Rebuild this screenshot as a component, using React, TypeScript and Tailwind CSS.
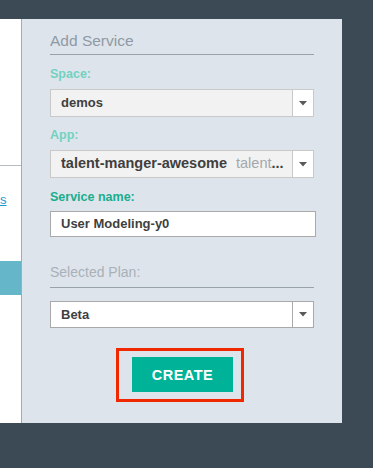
import React from "react";

const font = { fontFamily: '"Liberation Sans", Arial, Helvetica, sans-serif' };

function Arrow() {
  return (
    <svg width="8" height="5" viewBox="0 0 8 5" className="block">
      <path d="M0 0 L8 0 L4 4.5 Z" fill="#5a5a5a" />
    </svg>
  );
}

function Select({ bg, border, h, text = "text-[13px]", children }: { bg: string; border: string; h: string; text?: string; children: React.ReactNode }) {
  return (
    <div className={`flex w-[264px] ${h} border ${border} ${bg}`}>
      <div className={`flex flex-1 items-center pl-[10px] ${text} font-bold text-[#3f3f3f] whitespace-nowrap overflow-hidden`}>
        {children}
      </div>
      <div className={`flex w-[21px] items-center justify-center border-l ${border} bg-white`}>
        <Arrow />
      </div>
    </div>
  );
}

export default function App() {
  return (
    <div className="w-[373px] h-[468px] bg-[#3b4a55] pt-[19px] overflow-hidden" style={font}>
      <div className="flex h-[404px]">
        <div className="w-[21px] bg-white flex flex-col overflow-hidden">
          <div className="h-[146px]" />
          <div className="h-px bg-[#b5bcc2]" />
          <div className="h-[26px]" />
          <div className="text-[13px] leading-[15px] text-[#1a9bd7] underline">s</div>
          <div className="h-[54px]" />
          <div className="h-[34px] bg-[#64b6c8]" />
        </div>
        <div className="w-[321px] bg-[#dee4eb] border-l border-[#a3abb1] pl-[28px] pt-[13px]">
          <div className="w-[264px] border-b border-[#97a2ab] pb-[4px] text-[15.5px] leading-[18px] text-[#8e9aa5]">
            Add Service
          </div>
          <div className="mt-[12px] text-[12.5px] leading-[14px] font-bold text-[#72d2c1]">Space:</div>
          <div className="mt-[8px]">
            <Select bg="bg-[#f2f2f2]" border="border-[#c9c9c9]" h="h-[28px]">demos</Select>
          </div>
          <div className="mt-[11px] text-[12.5px] leading-[14px] font-bold text-[#72d2c1]">App:</div>
          <div className="mt-[8px]">
            <Select bg="bg-[#f2f2f2]" border="border-[#c9c9c9]" h="h-[28px]" text="text-[14.5px]">
              <span>talent-manger-awesome</span>
              <span className="ml-[9px] font-normal text-[#a3a8ad]">talent</span>
              <span className="text-[#3f3f3f]">...</span>
            </Select>
          </div>
          <div className="mt-[12px] text-[12.5px] leading-[14px] font-bold text-[#19ad8e]">Service name:</div>
          <div className="mt-[7px] w-[266px] h-[26px] border border-[#a9a9a9] bg-white flex items-center pl-[10px] text-[13px] font-bold text-[#3f3f3f]">
            User Modeling-y0
          </div>
          <div className="mt-[27px] w-[264px] border-b border-[#97a2ab] pb-[6px] text-[14px] leading-[17px] text-[#a9b1b8]">
            Selected Plan:
          </div>
          <div className="mt-[13px]">
            <Select bg="bg-white" border="border-[#a9a9a9]" h="h-[27px]">Beta</Select>
          </div>
          <div className="mt-[20px] ml-[66px] w-[128px] h-[54px] border-[3px] border-[#f02800] pt-[6px] pl-[13px]">
            <div className="w-[101px] h-[35px] bg-[#00b398] flex items-center justify-center pt-[2px] text-white font-bold text-[14.5px] tracking-[0.5px]">
              CREATE
            </div>
          </div>
        </div>
      </div>
    </div>
  );
}
